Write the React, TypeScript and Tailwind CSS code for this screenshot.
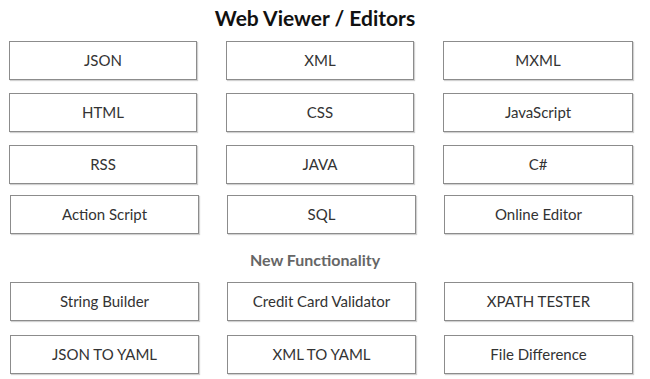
const EDITORS = [
  'JSON', 'XML', 'MXML',
  'HTML', 'CSS', 'JavaScript',
  'RSS', 'JAVA', 'C#',
  'Action Script', 'SQL', 'Online Editor',
]

const NEW_TOOLS = [
  'String Builder', 'Credit Card Validator', 'XPATH TESTER',
  'JSON TO YAML', 'XML TO YAML', 'File Difference',
]

function Tile({ label }: { label: string }) {
  return (
    <a
      href="#"
      className="flex h-[39px] items-center justify-center border border-[#8c8c8c] bg-white text-[15px] text-[#333]
                 shadow-[1px_1px_1px_rgba(0,0,0,0.18)]"
    >
      {label}
    </a>
  )
}

export default function App() {
  return (
    <div className="h-[379px] w-[650px] bg-white font-['Lato','Liberation_Sans',sans-serif]">
      <h1 className="pt-[4px] pr-[20px] text-center text-[21px] leading-[28px] font-bold text-[#111]">
        Web Viewer / Editors
      </h1>

      <div className="mt-[9px] grid grid-cols-[188px_188px_190px] gap-x-[29px] gap-y-[13px] pl-[9px]">
        {EDITORS.slice(0, 9).map((label) => (
          <Tile key={label} label={label} />
        ))}
      </div>
      <div className="mt-[11px] grid grid-cols-[189px_189px_189px] gap-x-[28px] pl-[10px]">
        {EDITORS.slice(9).map((label) => (
          <Tile key={label} label={label} />
        ))}
      </div>

      <h2 className="mt-[15px] pr-[20px] text-center text-[16px] leading-[22px] font-bold text-[#666]">
        New Functionality
      </h2>

      <div className="mt-[11px] grid grid-cols-[189px_189px_189px] gap-x-[28px] gap-y-[14px] pl-[10px]">
        {NEW_TOOLS.map((label) => (
          <Tile key={label} label={label} />
        ))}
      </div>
    </div>
  )
}
